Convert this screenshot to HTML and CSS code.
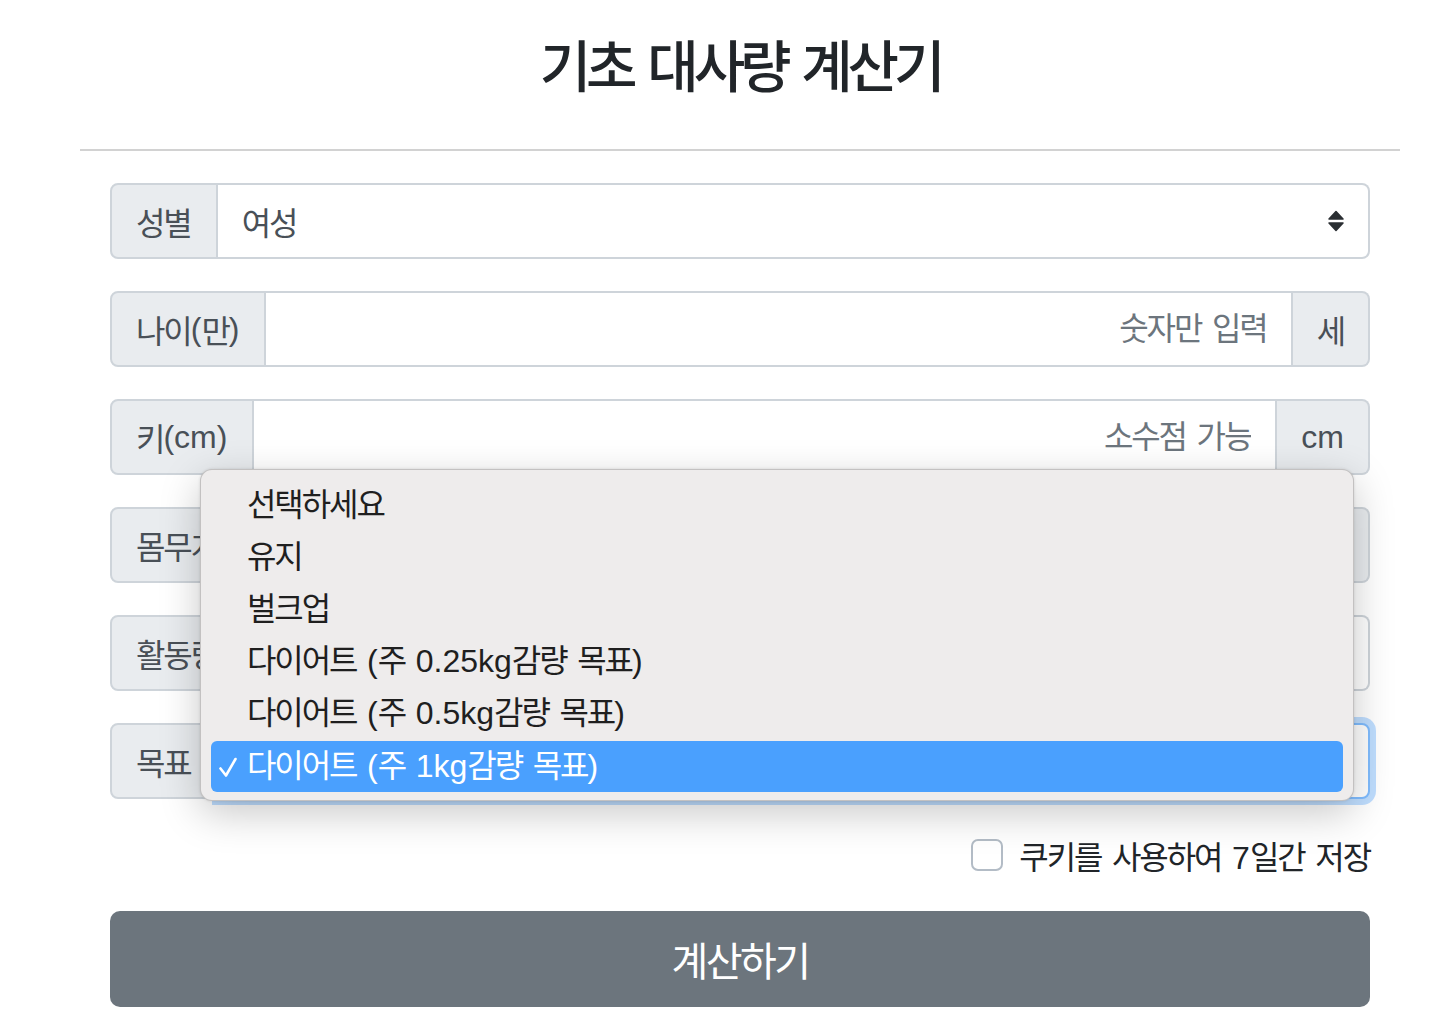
FILE: index.html
```html
<!DOCTYPE html>
<html lang="ko">
<head>
<meta charset="utf-8">
<title>기초 대사량 계산기</title>
<link rel="stylesheet" href="styles.css">
</head>
<body>
<div class="page">
  <h1 class="title">기초 대사량 계산기</h1>
  <hr class="rule">
  <form class="form">
    <div class="group">
      <span class="addon addon-left">성별</span>
      <div class="control select">
        <span class="value">여성</span>
        <svg class="arrows" width="16" height="22" viewBox="0 0 16 22"><path d="M1 9 L8 1.5 L15 9 Z" fill="#2b2f33" stroke="#2b2f33" stroke-width="1.5" stroke-linejoin="round"/><path d="M1 13 L8 20.5 L15 13 Z" fill="#2b2f33" stroke="#2b2f33" stroke-width="1.5" stroke-linejoin="round"/></svg>
      </div>
    </div>
    <div class="group">
      <span class="addon addon-left">나이<span class="lat">(</span>만<span class="lat">)</span></span>
      <input class="control input" type="text" placeholder="숫자만 입력">
      <span class="addon addon-right">세</span>
    </div>
    <div class="group">
      <span class="addon addon-left">키<span class="lat">(cm)</span></span>
      <input class="control input" type="text" placeholder="소수점 가능">
      <span class="addon addon-right lat">cm</span>
    </div>
    <div class="group">
      <span class="addon addon-left">몸무게<span class="lat">(kg)</span></span>
      <input class="control input" type="text" placeholder="소수점 가능">
      <span class="addon addon-right lat">kg</span>
    </div>
    <div class="group">
      <span class="addon addon-left">활동량</span>
      <div class="control select">
        <span class="value"></span>
        <svg class="arrows" width="16" height="22" viewBox="0 0 16 22"><path d="M1 9 L8 1.5 L15 9 Z" fill="#2b2f33" stroke="#2b2f33" stroke-width="1.5" stroke-linejoin="round"/><path d="M1 13 L8 20.5 L15 13 Z" fill="#2b2f33" stroke="#2b2f33" stroke-width="1.5" stroke-linejoin="round"/></svg>
      </div>
    </div>
    <div class="group">
      <span class="addon addon-left">목표</span>
      <div class="control select focused">
        <span class="value"></span>
        <svg class="arrows" width="16" height="22" viewBox="0 0 16 22"><path d="M1 9 L8 1.5 L15 9 Z" fill="#2b2f33" stroke="#2b2f33" stroke-width="1.5" stroke-linejoin="round"/><path d="M1 13 L8 20.5 L15 13 Z" fill="#2b2f33" stroke="#2b2f33" stroke-width="1.5" stroke-linejoin="round"/></svg>
      </div>
    </div>
    <div class="check">
      <span class="box"></span>
      <span class="check-label">쿠키를 사용하여 <span class="lat">7</span>일간 저장</span>
    </div>
    <div class="btn">계산하기</div>
  </form>

  <div class="popup">
    <div class="item">선택하세요</div>
    <div class="item">유지</div>
    <div class="item">벌크업</div>
    <div class="item">다이어트 <span class="lat">(</span>주 <span class="lat">0.25kg</span>감량 목표<span class="lat">)</span></div>
    <div class="item">다이어트 <span class="lat">(</span>주 <span class="lat">0.5kg</span>감량 목표<span class="lat">)</span></div>
    <div class="item selected"><svg class="tick" width="20" height="22" viewBox="0 0 20 22"><path d="M2.5 12.5 L8 19.5 L17.5 3" fill="none" stroke="#fff" stroke-width="2.6" stroke-linecap="round" stroke-linejoin="round"/></svg><span class="item-text">다이어트 <span class="lat">(</span>주 <span class="lat">1kg</span>감량 목표<span class="lat">)</span></span></div>
  </div>
</div>
</body>
</html>
```

FILE: styles.css
```css
html, body {
  margin: 0;
  padding: 0;
  background: #ffffff;
}

body {
  font-family: "Liberation Sans", "Noto Sans CJK KR", sans-serif;
  color: #212529;
}

.lat {
  letter-spacing: 0;
}

.page {
  position: relative;
  width: 1320px;
  margin-left: 80px;
}

.title {
  margin: 0;
  padding-top: 34px;
  font-size: 56px;
  line-height: 67px;
  font-weight: 500;
  text-align: center;
  letter-spacing: -0.092em;
  word-spacing: 0.08em;
  color: #212529;
}

.rule {
  border: 0;
  border-top: 2px solid #d2d2d2;
  margin: 48px 0 32px;
  height: 0;
}

.form {
  padding: 0 30px;
}

.group {
  display: flex;
  height: 76px;
  margin-bottom: 32px;
}

.addon {
  display: flex;
  align-items: center;
  padding: 0 24px;
  background: #e9ecef;
  border: 2px solid #ced4da;
  color: #495057;
  font-size: 32px;
  letter-spacing: -0.065em;
  white-space: nowrap;
}

.addon-left {
  border-radius: 8px 0 0 8px;
  padding-right: 25px;
}

.addon-right {
  border-left: 0;
  border-radius: 0 8px 8px 0;
}

.addon.lat {
  letter-spacing: 0;
}

.control {
  flex: 1;
  min-width: 0;
  box-sizing: border-box;
  height: 76px;
  border: 2px solid #ced4da;
  border-left: 0;
  background: #ffffff;
  font-family: inherit;
  font-size: 32px;
  color: #495057;
  letter-spacing: -0.065em;
  word-spacing: 0.12em;
  padding: 0 24px;
  margin: 0;
  outline: none;
}

.input {
  text-align: right;
}

.input::placeholder {
  color: #6c757d;
  opacity: 1;
}

.select {
  display: flex;
  align-items: center;
  border-radius: 0 8px 8px 0;
  padding-right: 24px;
}

.select .value {
  flex: 1;
}

.arrows {
  flex: none;
}

.focused {
  border: 2px solid #80bdff;
  box-shadow: 0 0 0 6px rgba(0, 123, 255, 0.25);
}

.check {
  display: flex;
  justify-content: flex-end;
  align-items: center;
  height: 48px;
  margin: 32px 0 32px;
  gap: 16px;
}

.box {
  width: 32px;
  height: 32px;
  box-sizing: border-box;
  border: 2px solid #b3bcc6;
  border-radius: 7px;
  background: #fff;
}

.check-label {
  font-size: 32px;
  letter-spacing: -0.065em;
  word-spacing: 0.12em;
  color: #212529;
}

.btn {
  height: 96px;
  display: flex;
  align-items: center;
  justify-content: center;
  background: #6c757d;
  color: #ffffff;
  border-radius: 10px;
  font-size: 40px;
  letter-spacing: -0.065em;
}

.popup {
  position: absolute;
  left: 120px;
  top: 469px;
  width: 1154px;
  height: 332px;
  box-sizing: border-box;
  padding: 10px 10px 0 10px;
  background: #eeecec;
  border: 1px solid rgba(0, 0, 0, 0.18);
  border-radius: 12px;
  box-shadow: 0 12px 40px rgba(0, 0, 0, 0.22), 0 0 3px rgba(0, 0, 0, 0.12);
}

.item {
  position: relative;
  height: 52px;
  line-height: 50px;
  padding-left: 36px;
  font-size: 32px;
  color: #1f1f1f;
  letter-spacing: -0.065em;
  word-spacing: 0.12em;
  white-space: nowrap;
}

.item.selected {
  height: 51px;
  margin-top: 1px;
  background: #4aa0fe;
  color: #ffffff;
  border-radius: 6px;
}

.tick {
  position: absolute;
  left: 7px;
  top: 15px;
}
```
